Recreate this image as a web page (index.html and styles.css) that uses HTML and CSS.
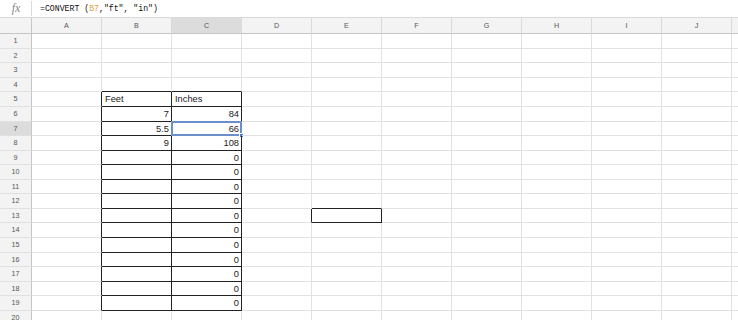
FILE: index.html
```html
<!DOCTYPE html>
<html>
<head>
<meta charset="utf-8">
<link rel="stylesheet" href="styles.css">
</head>
<body>
<div class="fbar">
  <div class="fx">fx</div>
  <div class="formula">=CONVERT (<span class="ref">B7</span>,"ft", "in")</div>
</div>
<div class="sheet">
  <div class="row head"><div class="corner"></div><div class="ch">A</div><div class="ch">B</div><div class="ch sel">C</div><div class="ch">D</div><div class="ch">E</div><div class="ch">F</div><div class="ch">G</div><div class="ch">H</div><div class="ch">I</div><div class="ch">J</div><div class="ch"></div></div>
  <div class="row"><div class="rh">1</div><div class="c"></div><div class="c"></div><div class="c"></div><div class="c"></div><div class="c"></div><div class="c"></div><div class="c"></div><div class="c"></div><div class="c"></div><div class="c"></div><div class="c"></div></div>
  <div class="row"><div class="rh">2</div><div class="c"></div><div class="c"></div><div class="c"></div><div class="c"></div><div class="c"></div><div class="c"></div><div class="c"></div><div class="c"></div><div class="c"></div><div class="c"></div><div class="c"></div></div>
  <div class="row"><div class="rh">3</div><div class="c"></div><div class="c"></div><div class="c"></div><div class="c"></div><div class="c"></div><div class="c"></div><div class="c"></div><div class="c"></div><div class="c"></div><div class="c"></div><div class="c"></div></div>
  <div class="row"><div class="rh">4</div><div class="c"></div><div class="c bb"></div><div class="c bb"></div><div class="c"></div><div class="c"></div><div class="c"></div><div class="c"></div><div class="c"></div><div class="c"></div><div class="c"></div><div class="c"></div></div>
  <div class="row"><div class="rh">5</div><div class="c br"></div><div class="c br bb">Feet</div><div class="c br bb">Inches</div><div class="c"></div><div class="c"></div><div class="c"></div><div class="c"></div><div class="c"></div><div class="c"></div><div class="c"></div><div class="c"></div></div>
  <div class="row"><div class="rh">6</div><div class="c br"></div><div class="c br bb num">7</div><div class="c br bb num">84</div><div class="c"></div><div class="c"></div><div class="c"></div><div class="c"></div><div class="c"></div><div class="c"></div><div class="c"></div><div class="c"></div></div>
  <div class="row"><div class="rh sel">7</div><div class="c br"></div><div class="c br bb num">5.5</div><div class="c br bb num active">66<span class="selbox"></span><span class="handle"></span></div><div class="c"></div><div class="c"></div><div class="c"></div><div class="c"></div><div class="c"></div><div class="c"></div><div class="c"></div><div class="c"></div></div>
  <div class="row"><div class="rh">8</div><div class="c br"></div><div class="c br bb num">9</div><div class="c br bb num">108</div><div class="c"></div><div class="c"></div><div class="c"></div><div class="c"></div><div class="c"></div><div class="c"></div><div class="c"></div><div class="c"></div></div>
  <div class="row"><div class="rh">9</div><div class="c br"></div><div class="c br bb"></div><div class="c br bb num">0</div><div class="c"></div><div class="c"></div><div class="c"></div><div class="c"></div><div class="c"></div><div class="c"></div><div class="c"></div><div class="c"></div></div>
  <div class="row"><div class="rh">10</div><div class="c br"></div><div class="c br bb"></div><div class="c br bb num">0</div><div class="c"></div><div class="c"></div><div class="c"></div><div class="c"></div><div class="c"></div><div class="c"></div><div class="c"></div><div class="c"></div></div>
  <div class="row"><div class="rh">11</div><div class="c br"></div><div class="c br bb"></div><div class="c br bb num">0</div><div class="c"></div><div class="c"></div><div class="c"></div><div class="c"></div><div class="c"></div><div class="c"></div><div class="c"></div><div class="c"></div></div>
  <div class="row"><div class="rh">12</div><div class="c br"></div><div class="c br bb"></div><div class="c br bb num">0</div><div class="c"></div><div class="c bb"></div><div class="c"></div><div class="c"></div><div class="c"></div><div class="c"></div><div class="c"></div><div class="c"></div></div>
  <div class="row"><div class="rh">13</div><div class="c br"></div><div class="c br bb"></div><div class="c br bb num">0</div><div class="c br"></div><div class="c br bb"></div><div class="c"></div><div class="c"></div><div class="c"></div><div class="c"></div><div class="c"></div><div class="c"></div></div>
  <div class="row"><div class="rh">14</div><div class="c br"></div><div class="c br bb"></div><div class="c br bb num">0</div><div class="c"></div><div class="c"></div><div class="c"></div><div class="c"></div><div class="c"></div><div class="c"></div><div class="c"></div><div class="c"></div></div>
  <div class="row"><div class="rh">15</div><div class="c br"></div><div class="c br bb"></div><div class="c br bb num">0</div><div class="c"></div><div class="c"></div><div class="c"></div><div class="c"></div><div class="c"></div><div class="c"></div><div class="c"></div><div class="c"></div></div>
  <div class="row"><div class="rh">16</div><div class="c br"></div><div class="c br bb"></div><div class="c br bb num">0</div><div class="c"></div><div class="c"></div><div class="c"></div><div class="c"></div><div class="c"></div><div class="c"></div><div class="c"></div><div class="c"></div></div>
  <div class="row"><div class="rh">17</div><div class="c br"></div><div class="c br bb"></div><div class="c br bb num">0</div><div class="c"></div><div class="c"></div><div class="c"></div><div class="c"></div><div class="c"></div><div class="c"></div><div class="c"></div><div class="c"></div></div>
  <div class="row"><div class="rh">18</div><div class="c br"></div><div class="c br bb"></div><div class="c br bb num">0</div><div class="c"></div><div class="c"></div><div class="c"></div><div class="c"></div><div class="c"></div><div class="c"></div><div class="c"></div><div class="c"></div></div>
  <div class="row"><div class="rh">19</div><div class="c br"></div><div class="c br bb"></div><div class="c br bb num">0</div><div class="c"></div><div class="c"></div><div class="c"></div><div class="c"></div><div class="c"></div><div class="c"></div><div class="c"></div><div class="c"></div></div>
  <div class="row"><div class="rh">20</div><div class="c"></div><div class="c"></div><div class="c"></div><div class="c"></div><div class="c"></div><div class="c"></div><div class="c"></div><div class="c"></div><div class="c"></div><div class="c"></div><div class="c"></div></div>
</div>
</body>
</html>
```
FILE: styles.css
```css
* { box-sizing: border-box; }
html, body { margin: 0; padding: 0; background: #fff; overflow: hidden; }
body { width: 738px; height: 320px; font-family: "Liberation Sans", Arial, sans-serif; }

.fbar {
  display: flex;
  height: 18px;
  border-bottom: 1px solid #dadada;
  background: #fff;
}
.fx {
  width: 32px;
  border-right: 1px solid #dadada;
  margin: 1px 0;
  font-family: "Liberation Serif", serif;
  font-style: italic;
  font-size: 12px;
  color: #888;
  text-align: center;
  line-height: 15px;
  padding-left: 1px;
}
.formula {
  padding-left: 8px;
  font-family: "Liberation Mono", monospace;
  font-size: 8.2px;
  line-height: 17px;
  color: #111;
}
.ref { color: #e1a13a; }

.sheet { display: flex; flex-direction: column; }
.row { display: flex; height: 14.55px; flex: none; }
.row.head { height: 16.3px; }

.corner, .rh {
  width: 32px;
  flex: none;
  background: #f3f3f3;
  border-right: 1px solid #c6c6c6;
  border-bottom: 1px solid #e0e0e0;
  color: #555;
  font-size: 7.2px;
  text-align: center;
  line-height: 14px;
}
.corner { border-bottom: 1px solid #c6c6c6; }
.rh.sel { background: #dcdcdc; }
.ch {
  width: 70px;
  flex: none;
  background: #f3f3f3;
  border-right: 1px solid #dadada;
  border-bottom: 1px solid #c6c6c6;
  color: #555;
  font-size: 7.2px;
  text-align: center;
  line-height: 16px;
}
.ch.sel { background: #dcdcdc; }

.c {
  position: relative;
  width: 70px;
  flex: none;
  border-right: 1px solid #e2e2e2;
  border-bottom: 1px solid #e2e2e2;
  font-size: 9.3px;
  color: #222;
  line-height: 14px;
  padding: 0 2px 0 3px;
  white-space: nowrap;
}
.c.br { border-right-color: #222; }
.c.bb { border-bottom-color: #222; }
.c.num { text-align: right; }

.selbox {
  position: absolute;
  left: -1px; top: -1px; right: -1px; bottom: -1px;
  border: 2px solid #6c8fc9;
}
.handle {
  position: absolute;
  right: -3px; bottom: -3px;
  width: 5px; height: 5px;
  background: #4a7bd0;
  border: 1px solid #fff;
}
```
